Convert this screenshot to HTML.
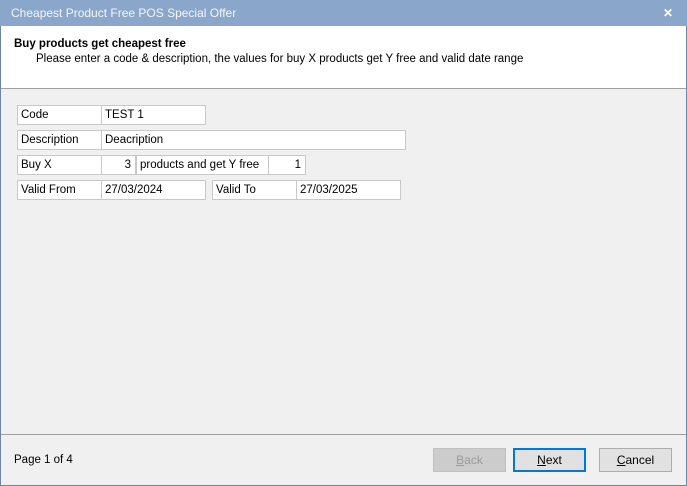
<html><head><style>
body{margin:0;width:687px;height:486px;position:relative;overflow:hidden;background:#f0f0f0;font-family:"Liberation Sans",Arial,sans-serif;font-size:11.5px;color:#000}
.a{position:absolute;box-sizing:border-box}
.c{background:#fff;border:1px solid #c8c8c8;line-height:18px;padding-left:3px;white-space:nowrap}
.b{border:1px solid #adadad;background:#e1e1e1;text-align:center;line-height:22px;font-size:12px}
</style></head><body>
<div class="a" style="left:0;top:0;width:687px;height:486px;border:1px solid #6f86a8;border-top:none"></div>
<div class="a" style="left:0;top:0;width:687px;height:26px;background:#8ba6cb;color:#f4f6fa;font-size:12px;line-height:26px;padding-left:11px">Cheapest Product Free POS Special Offer<span style="position:absolute;right:14px;top:0;font-size:12px;font-weight:bold;color:#fff">✕</span></div>
<div class="a" style="left:1px;top:26px;width:685px;height:63px;background:#fff;border-bottom:1px solid #a0a0a0"></div>
<div class="a" style="left:14px;top:38px;font-weight:bold;font-size:11.5px">Buy products get cheapest free</div>
<div class="a" style="left:36px;top:53px;font-size:11.5px">Please enter a code &amp; description, the values for buy X products get Y free and valid date range</div>
<div class="a c" style="left:17px;top:105px;width:85px;height:20px">Code</div>
<div class="a c" style="left:101px;top:105px;width:105px;height:20px">TEST 1</div>
<div class="a c" style="left:17px;top:130px;width:85px;height:20px">Description</div>
<div class="a c" style="left:101px;top:130px;width:305px;height:20px">Deacription</div>
<div class="a c" style="left:17px;top:155px;width:85px;height:20px">Buy X</div>
<div class="a c" style="left:101px;top:155px;width:35px;height:20px;text-align:right;padding-right:4px">3</div>
<div class="a c" style="left:136px;top:155px;width:133px;height:20px">products and get Y free</div>
<div class="a c" style="left:268px;top:155px;width:38px;height:20px;text-align:right;padding-right:4px">1</div>
<div class="a c" style="left:17px;top:180px;width:85px;height:20px">Valid From</div>
<div class="a c" style="left:101px;top:180px;width:105px;height:20px">27/03/2024</div>
<div class="a c" style="left:212px;top:180px;width:85px;height:20px">Valid To</div>
<div class="a c" style="left:296px;top:180px;width:105px;height:20px">27/03/2025</div>
<div class="a" style="left:1px;top:434px;width:685px;height:1px;background:#a0a0a0"></div>
<div class="a" style="left:14px;top:454px;font-size:11.5px">Page 1 of 4</div>
<div class="a b" style="left:433px;top:448px;width:73px;height:24px;background:#cccccc;border-color:#bfbfbf;color:#9a9a9a"><u>B</u>ack</div>
<div class="a b" style="left:513px;top:448px;width:73px;height:24px;border:2px solid #0078d7;line-height:20px"><u>N</u>ext</div>
<div class="a b" style="left:599px;top:448px;width:73px;height:24px"><u>C</u>ancel</div>
</body></html>
